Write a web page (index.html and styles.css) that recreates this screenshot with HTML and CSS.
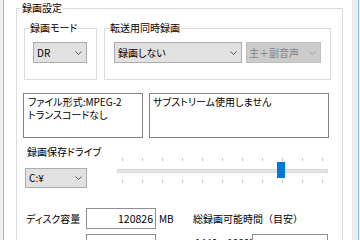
FILE: index.html
```html
<!DOCTYPE html>
<html lang="ja">
<head>
<meta charset="utf-8">
<link rel="stylesheet" href="styles.css">
</head>
<body>
<div class="window">
  <div class="edge-l"></div>
  <div class="accent"></div>
  <div class="page">
    <fieldset class="group outer">
      <legend>録画設定</legend>
      <div class="modes">
        <fieldset class="group mode">
          <legend>録画モード</legend>
          <div class="combo combo-dr"><span>DR</span><svg class="chev" width="7" height="4" viewBox="0 0 7 4"><polyline points="0.5,0.5 3.5,3.5 6.5,0.5"/></svg></div>
        </fieldset>
        <fieldset class="group sim">
          <legend>転送用同時録画</legend>
          <div class="combos">
            <div class="combo combo-sim"><span>録画しない</span><svg class="chev" width="7" height="4" viewBox="0 0 7 4"><polyline points="0.5,0.5 3.5,3.5 6.5,0.5"/></svg></div>
            <div class="combo combo-audio disabled"><span>主＋副音声</span><svg class="chev" width="7" height="4" viewBox="0 0 7 4"><polyline points="0.5,0.5 3.5,3.5 6.5,0.5"/></svg></div>
          </div>
        </fieldset>
      </div>
      <div class="infos">
        <div class="info info-format"><div class="info-line">ファイル形式:MPEG-2</div><div class="info-line">トランスコードなし</div></div>
        <div class="info info-sub"><div class="info-line">サブストリーム使用しません</div></div>
      </div>
      <div class="drive">
        <div class="drive-left">
          <div class="drive-label">録画保存ドライブ</div>
          <div class="combo combo-drive"><span>C:¥</span><svg class="chev" width="7" height="4" viewBox="0 0 7 4"><polyline points="0.5,0.5 3.5,3.5 6.5,0.5"/></svg></div>
        </div>
        <div class="slider">
          <div class="ticks"><i></i><i></i><i></i><i></i><i></i><i></i><i></i><i></i><i></i><i></i><i></i></div>
          <div class="track"></div>
          <div class="ticks ticks-bottom"><i></i><i></i><i></i><i></i><i></i><i></i><i></i><i></i><i></i><i></i><i></i></div>
          <div class="thumb"></div>
        </div>
      </div>
      <div class="disk-row">
        <span class="disk-label">ディスク容量</span>
        <div class="field">120826</div>
        <span class="unit">MB</span>
        <span class="total-label">総録画可能時間<span class="wide">（目安）</span></span>
      </div>
      <div class="disk-row row2">
        <div class="field field-left">2000</div>
        <span class="res-label">1440×1080i:</span>
        <div class="field field-time">12時間38分</div>
      </div>
    </fieldset>
  </div>
  <div class="edge-r"></div>
  <div class="accent"></div>
  <div class="edge-end"></div>
</div>
</body>
</html>
```

FILE: styles.css
```css
* { box-sizing: border-box; }
html, body { margin: 0; padding: 0; }
body {
  width: 360px;
  height: 240px;
  overflow: hidden;
  background: #f0f0f0;
  font-family: "Noto Sans CJK JP", "Noto Sans", sans-serif;
  font-size: 10px;
  line-height: 14px;
  color: #000;
  font-feature-settings: "palt";
}
.window { display: flex; height: 240px; }
.edge-l { width: 3px; background: #f0f0f0; }
.accent { width: 1px; background: #86bbea; }
.page {
  width: 348px;
  background: #fff;
  padding: 1px 9px 0 12px;
  overflow: hidden;
}
.edge-r { width: 6px; background: #ececec; }
.edge-end { width: 1px; background: #f4f4f4; }

.group {
  margin: 0;
  border: 1px solid #dcdcdc;
  min-width: 0;
}
.group > legend { padding: 0 1px; font-size: 10px; line-height: 14px; }
.outer { padding: 6px 0 0 7px; height: 270px; }
.outer > legend { margin-left: -3px; }

.modes { display: flex; gap: 7px; }
.mode { width: 73px; padding: 7px 0 16px 8px; }
.mode > legend { margin-left: -4px; }
.sim { width: 227px; padding: 7px 0 16px 9px; }
.sim > legend { margin-left: -5px; }
.combos { display: flex; gap: 4px; }

.combo {
  display: flex;
  align-items: center;
  justify-content: space-between;
  height: 21px;
  background: #e1e1e1;
  border: 1px solid #adadad;
  padding: 0 4px 0 3px;
  white-space: nowrap;
}
.chev { fill: none; stroke: #5c5c5c; stroke-width: 1; }
.combo-dr { width: 54px; }
.combo-sim { width: 128px; }
.combo-audio { width: 75px; padding-left: 2px; }
.disabled { background: #cccccc; border-color: #bfbfbf; color: #838383; }
.disabled .chev { stroke: #a6a6a6; }

.infos { display: flex; gap: 6px; margin: 13px 0 0 -1px; }
.info {
  height: 45px;
  border: 1px solid #828282;
  padding: 1px 4px;
  white-space: nowrap;
}
.info-line { height: 13px; line-height: 13px; }
.info-format { width: 120px; }
.info-sub { width: 180px; padding-left: 3px; }

.drive { display: flex; margin-top: 7px; }
.drive-left { width: 93px; }
.drive-label { margin-left: 3px; }
.combo-drive { width: 62px; height: 20px; margin: 9px 0 0 1px; }

.slider { position: relative; width: 211px; margin-top: 12px; }
.ticks {
  display: flex;
  justify-content: space-between;
  padding: 0 5px;
  height: 3px;
  margin-top: 1px;
}
.ticks i { display: block; width: 1px; height: 3px; background: #c4c4c4; }
.track {
  height: 4px;
  margin-top: 8px;
  background: #e7e7e7;
  border: 1px solid #d6d6d6;
}
.ticks-bottom { margin-top: 7px; }
.thumb {
  position: absolute;
  left: 160px;
  top: 5px;
  width: 8px;
  height: 16px;
  background: #0078d7;
}

.disk-row { display: flex; align-items: center; height: 21px; margin-top: 20px; white-space: nowrap; }
.disk-label { width: 60px; margin-left: 2px; }
.field {
  width: 70px;
  height: 21px;
  border: 1px solid #8f8f8f;
  text-align: right;
  padding: 2px 2px 0;
  font-size: 10.5px;
  line-height: 15px;
}
.unit { margin-left: 3px; width: 34px; }
.wide { font-feature-settings: normal; }
.row2 { margin-top: 5px; align-items: flex-start; }
.field-left { margin-left: 62px; }
.res-label { margin-left: 39px; width: 57px; padding-top: 2px; }
.field-time { width: 76px; padding-right: 4px; }
```
